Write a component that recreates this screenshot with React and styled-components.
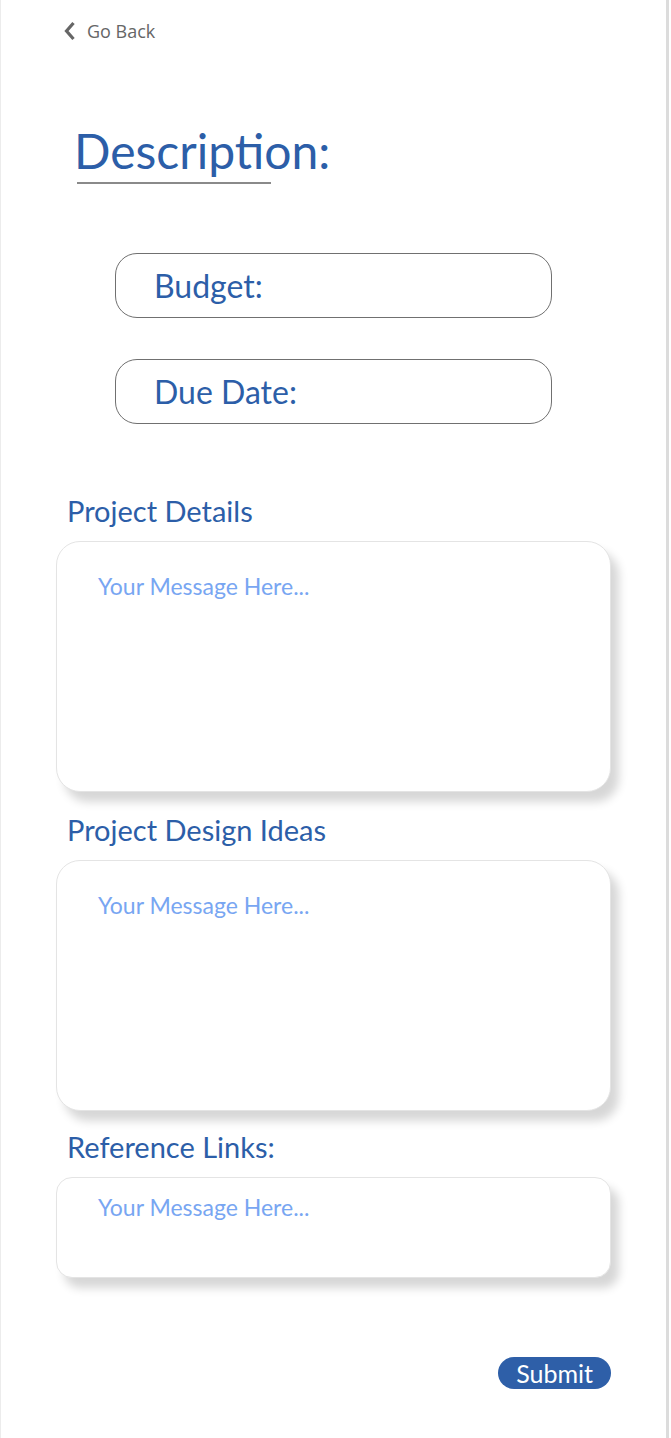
import styled, { createGlobalStyle } from "styled-components";

const GlobalStyle = createGlobalStyle`
  html, body {
    margin: 0;
    padding: 0;
    background: #ffffff;
  }
  body {
    font-family: Lato, "Open Sans", sans-serif;
  }
`;

export default function App() {
  return (
    <>
      <GlobalStyle />
      <Page>
        <BackLink>
          <svg width="13" height="20" viewBox="0 0 13 20">
            <path d="M10.5 2 L3.5 10 L10.5 18" fill="none" stroke="#666" strokeWidth="3.2" />
          </svg>
          <span>Go Back</span>
        </BackLink>

        <Heading>Description:</Heading>
        <HeadingRule />

        <PillField>Budget:</PillField>
        <PillField>Due Date:</PillField>

        <SectionLabel $top={68}>Project Details</SectionLabel>
        <MessageBox $height={251}>
          <Placeholder>Your Message Here...</Placeholder>
        </MessageBox>

        <SectionLabel $top={19}>Project Design Ideas</SectionLabel>
        <MessageBox $height={251}>
          <Placeholder>Your Message Here...</Placeholder>
        </MessageBox>

        <SectionLabel $top={17}>Reference Links:</SectionLabel>
        <MessageBox $height={101} $small>
          <Placeholder>Your Message Here...</Placeholder>
        </MessageBox>

        <Footer>
          <SubmitButton type="button">Submit</SubmitButton>
        </Footer>
      </Page>
    </>
  );
}

const Page = styled.div`
  box-sizing: border-box;
  width: 669px;
  min-height: 1438px;
  border-left: 1px solid #ececec;
  border-right: 3px solid #dcdcdc;
  display: flex;
  flex-direction: column;
`;

const BackLink = styled.div`
  display: flex;
  align-items: center;
  gap: 11px;
  margin: 19px 0 0 62px;
  font-family: "Open Sans", sans-serif;
  font-size: 18px;
  color: #666666;
`;

const Heading = styled.h1`
  margin: 78px 0 0 73px;
  font-family: Lato, sans-serif;
  font-weight: 400;
  font-size: 48px;
  line-height: 60px;
  color: #2c5ea8;
`;

const HeadingRule = styled.div`
  width: 194px;
  height: 2px;
  margin: 1px 0 0 76px;
  background: #8a8a8a;
`;

const PillField = styled.div`
  box-sizing: border-box;
  width: 437px;
  height: 65px;
  margin: 69px 0 0 114px;
  & + & {
    margin-top: 41px;
  }
  padding-left: 38px;
  display: flex;
  align-items: center;
  border: 1.5px solid #707070;
  border-radius: 22px;
  font-size: 32px;
  color: #2c5ea8;
`;

const SectionLabel = styled.div`
  margin: ${(p) => p.$top}px 0 0 66px;
  font-size: 29px;
  line-height: 38px;
  color: #2c5ea8;
`;

const MessageBox = styled.div`
  box-sizing: border-box;
  width: 555px;
  height: ${(p) => p.$height}px;
  margin: 11px 0 0 55px;
  padding: ${(p) => (p.$small ? "14px 41px" : "29px 41px")};
  background: #ffffff;
  border: 1.5px solid #e4e4e4;
  border-radius: ${(p) => (p.$small ? "16px" : "24px")};
  box-shadow: 8px 10px 10px rgba(0, 0, 0, 0.16);
`;

const Placeholder = styled.div`
  font-size: 23px;
  line-height: 30px;
  color: #78a6f2;
`;

const Footer = styled.div`
  display: flex;
  justify-content: flex-end;
  width: 610px;
  margin-top: 79px;
`;

const SubmitButton = styled.button`
  height: 32px;
  padding: 0 18px;
  border: none;
  border-radius: 16px;
  background: #2e5fa8;
  color: #ffffff;
  font-family: Lato, sans-serif;
  font-size: 25px;
  line-height: 32px;
`;
